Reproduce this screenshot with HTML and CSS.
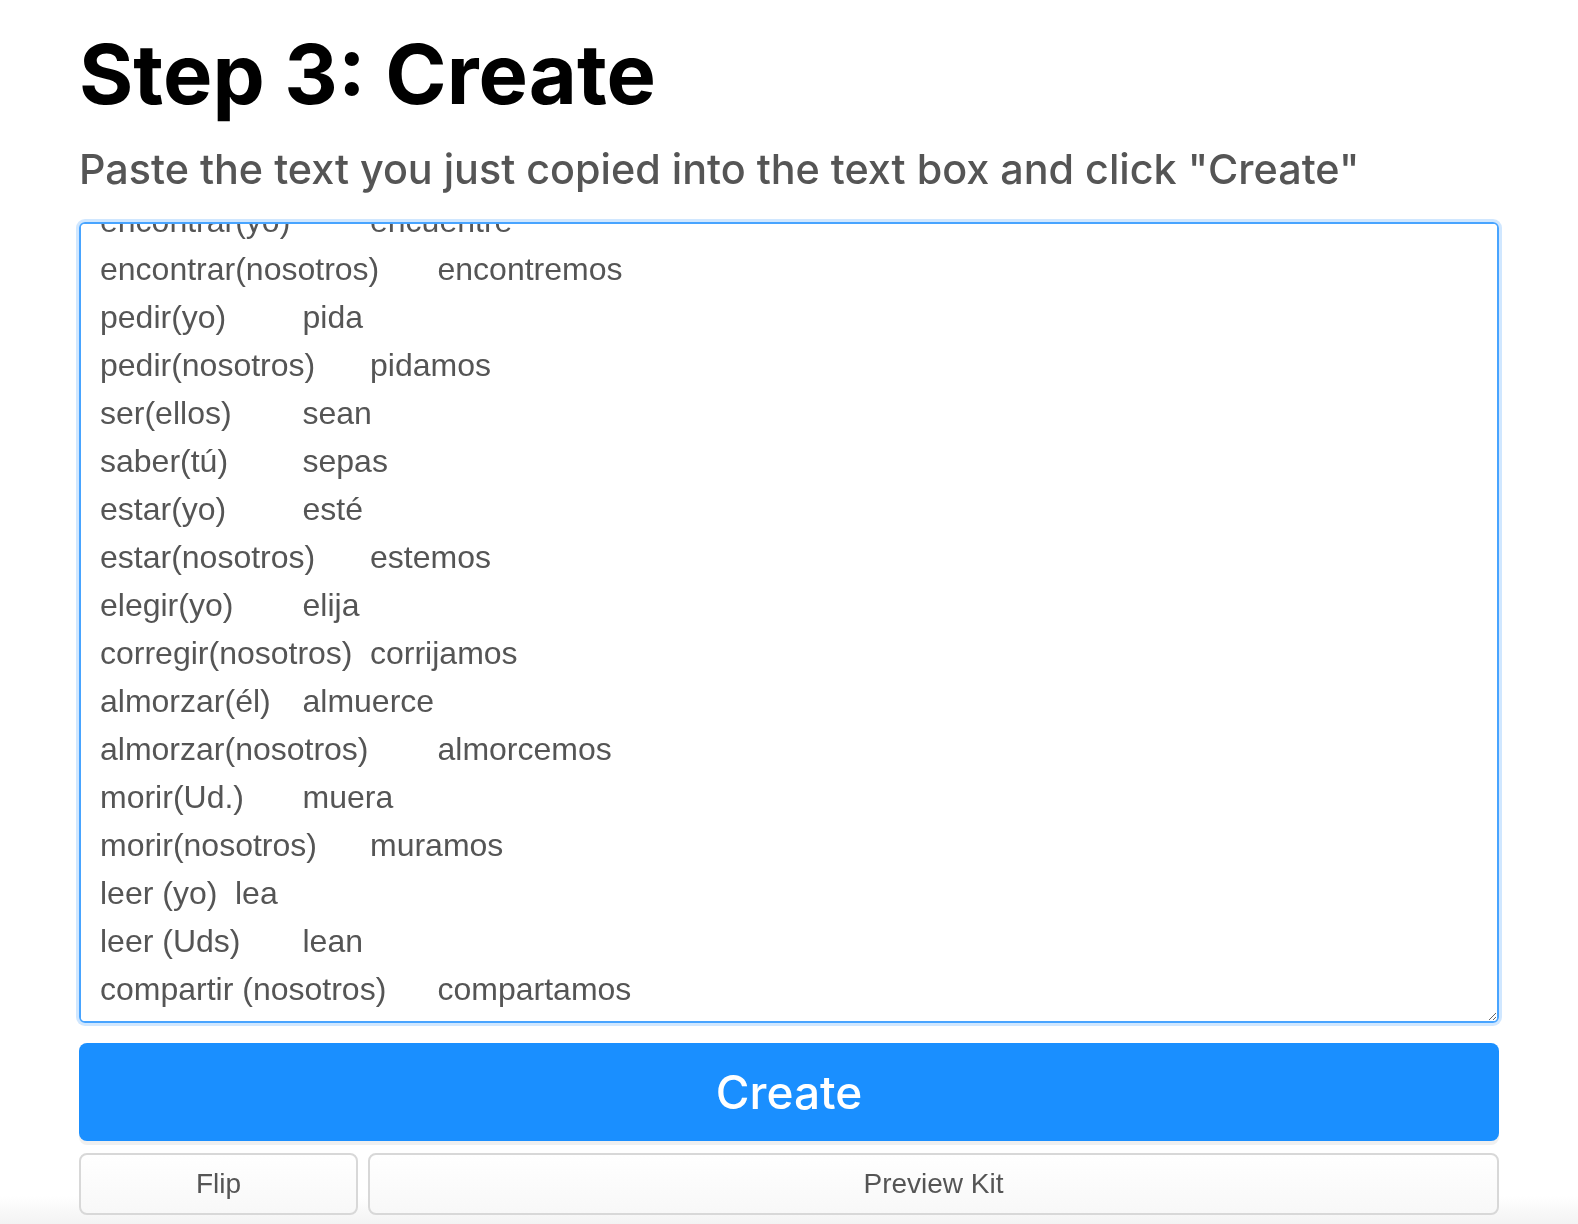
FILE: index.html
```html
<!DOCTYPE html>
<html lang="en">
<head>
<meta charset="utf-8">
<title>Step 3: Create</title>
<link rel="stylesheet" href="styles.css">
</head>
<body>
<main class="page">
  <h1 class="step-title">Step 3: Create</h1>
  <p class="step-desc">Paste the text you just copied into the text box and click "Create"</p>
  <textarea class="import-box" spellcheck="false">encontrar(yo)&#9;&#9;encuentre
encontrar(nosotros)&#9;encontremos
pedir(yo)&#9;&#9;pida
pedir(nosotros)&#9;pidamos
ser(ellos)&#9;sean
saber(tú)&#9;&#9;sepas
estar(yo)&#9;&#9;esté
estar(nosotros)&#9;estemos
elegir(yo)&#9;elija
corregir(nosotros)&#9;corrijamos
almorzar(él)&#9;almuerce
almorzar(nosotros)&#9;almorcemos
morir(Ud.)&#9;muera
morir(nosotros)&#9;muramos
leer (yo)&#9;lea
leer (Uds)&#9;lean
compartir (nosotros)&#9;compartamos</textarea>
  <button class="btn-create" type="button">Create</button>
  <div class="secondary-row">
    <button class="btn-secondary" type="button">Flip</button>
    <button class="btn-secondary" type="button">Preview Kit</button>
  </div>
</main>
<script src="script.js"></script>
</body>
</html>
```

FILE: styles.css
```css
html {
  height: 100%;
  background: linear-gradient(to bottom, #ffffff calc(100% - 28px), #f3f3f3 100%);
}

body {
  margin: 0;
  font-family: Inter, "Liberation Sans", sans-serif;
}

.page {
  width: 1420px;
  margin: 0 auto;
  padding-top: 24px;
}

.step-title {
  margin: 0;
  font-size: 83px;
  line-height: 100px;
  font-weight: 700;
  color: #000;
}

.step-desc {
  margin: 20px 0 0;
  font-size: 41.3px;
  line-height: 50px;
  font-weight: 500;
  color: #555;
}

.import-box {
  display: block;
  box-sizing: border-box;
  width: 100%;
  height: 801px;
  margin: 28px 0 0;
  padding: 12px 19px;
  border: 2px solid #48a4ff;
  border-radius: 6px;
  box-shadow: 0 0 0 3px #d0e7ff;
  outline: none;
  background: #fff;
  color: #555;
  font-family: "Liberation Sans", Arial, sans-serif;
  font-size: 32px;
  line-height: 48px;
  tab-size: 67.5px;
  white-space: pre-wrap;
  overflow-y: auto;
  scrollbar-width: none;
}

.import-box::-webkit-scrollbar {
  width: 0;
  height: 0;
}

.btn-create {
  display: block;
  width: 100%;
  height: 98px;
  margin-top: 20px;
  border: none;
  border-radius: 8px;
  background: #1a8fff;
  box-shadow: 0 4px 0 #f0f0f0;
  color: #fff;
  font-family: Inter, "Liberation Sans", sans-serif;
  font-size: 46px;
  font-weight: 500;
  cursor: pointer;
}

.secondary-row {
  display: grid;
  grid-template-columns: 279px 1fr;
  gap: 10px;
  margin-top: 12px;
}

.btn-secondary {
  height: 62px;
  border: 2px solid #d8d8d8;
  border-radius: 8px;
  background: linear-gradient(to bottom, #ffffff, #f8f8f8);
  color: #555;
  font-family: "Liberation Sans", Arial, sans-serif;
  font-size: 28px;
  cursor: pointer;
}
```

FILE: script.js
```js
document.querySelector('.import-box').scrollTop = 39;
```
